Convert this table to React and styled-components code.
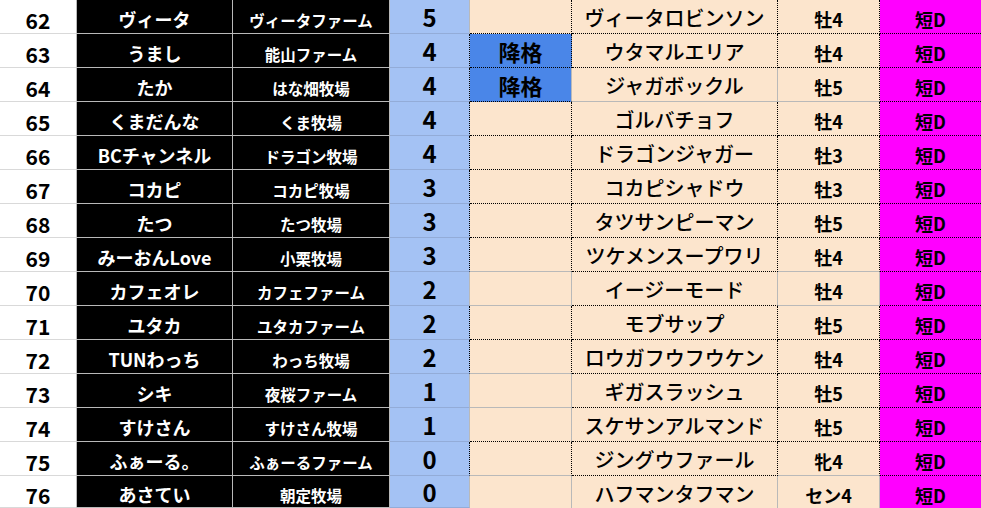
import React from "react";
import styled, { createGlobalStyle } from "styled-components";

const GlobalStyle = createGlobalStyle`
  html, body {
    margin: 0;
    padding: 0;
    background: #ffffff;
    overflow: hidden;
  }
  * {
    box-sizing: border-box;
  }
`;

const FONT = `"Noto Sans CJK JP", "Noto Sans", sans-serif`;

const LINE = {
  d: "1px dotted #000000",
  g: "1px solid #b9b9b9",
  l: "1px solid #d9d9d9",
  b: "1px solid #93acd8",
};

const Sheet = styled.div`
  display: grid;
  grid-template-columns: 77px 156px 157px 80px 102px 206px 102px 1fr;
  grid-template-rows: repeat(14, 34px) 32px;
  width: 981px;
  height: 508px;
  overflow: hidden;
  font-family: ${FONT};
`;

const Cell = styled.div`
  display: flex;
  align-items: center;
  justify-content: center;
  padding-top: ${(p) => p.$pt || 0}px;
  background: ${(p) => p.$bg || "#ffffff"};
  color: ${(p) => p.$color || "#000000"};
  font-size: ${(p) => p.$size}px;
  font-weight: ${(p) => p.$weight || 700};
  line-height: 1;
  white-space: nowrap;
  border-right: ${(p) => LINE[p.$right] || "none"};
  border-bottom: ${(p) => LINE[p.$bottom] || "none"};
`;

// v: right edges of col3..col6, h: bottoms of col4..col7
const rows = [
  ["62", "ヴィータ", "ヴィータファーム", "5", "", "ヴィータロビンソン", "牡4", "gddd", "dddd"],
  ["63", "うまし", "能山ファーム", "4", "降格", "ウタマルエリア", "牡4", "dddd", "dddd"],
  ["64", "たか", "はな畑牧場", "4", "降格", "ジャガボックル", "牡5", "dggd", "dggd"],
  ["65", "くまだんな", "くま牧場", "4", "", "ゴルバチョフ", "牡4", "dddd", "dddd"],
  ["66", "BCチャンネル", "ドラゴン牧場", "4", "", "ドラゴンジャガー", "牡3", "dddd", "dddd"],
  ["67", "コカピ", "コカピ牧場", "3", "", "コカピシャドウ", "牡3", "dddd", "dddd"],
  ["68", "たつ", "たつ牧場", "3", "", "タツサンピーマン", "牡5", "dddd", "dddd"],
  ["69", "みーおんLove", "小栗牧場", "3", "", "ツケメンスープワリ", "牡4", "dddd", "gdgd"],
  ["70", "カフェオレ", "カフェファーム", "2", "", "イージーモード", "牡4", "gggg", "gdgd"],
  ["71", "ユタカ", "ユタカファーム", "2", "", "モブサップ", "牡5", "dddd", "dddd"],
  ["72", "TUNわっち", "わっち牧場", "2", "", "ロウガフウフウケン", "牡4", "dddd", "gddd"],
  ["73", "シキ", "夜桜ファーム", "1", "", "ギガスラッシュ", "牡5", "ggdd", "gddd"],
  ["74", "すけさん", "すけさん牧場", "1", "", "スケサンアルマンド", "牡5", "ggdd", "dddd"],
  ["75", "ふぁーる。", "ふぁーるファーム", "0", "", "ジングウファール", "牝4", "dddd", "gdgd"],
  ["76", "あさてい", "朝定牧場", "0", "", "ハフマンタフマン", "セン4", "gggg", "...."],
];

const PEACH = "#fce5cd";

const Row = ({ data }) => {
  const [no, owner, farm, pts, mark, horse, sex, v, h] = data;
  return (
    <>
      <Cell $size={21} $pt={7} $right="g" $bottom="l">
        {no}
      </Cell>
      <Cell $bg="#000000" $color="#ffffff" $size={18} $pt={5} $right="g" $bottom="g">
        {owner}
      </Cell>
      <Cell $bg="#000000" $color="#ffffff" $size={15.5} $pt={9} $right="g" $bottom="g">
        {farm}
      </Cell>
      <Cell $bg="#a4c2f4" $size={24} $pt={0} $right={v[0]} $bottom="b">
        {pts}
      </Cell>
      <Cell $bg={mark ? "#4a86e8" : PEACH} $size={22} $pt={0} $right={v[1]} $bottom={h[0]}>
        {mark}
      </Cell>
      <Cell $bg={PEACH} $size={20} $weight={500} $pt={3} $right={v[2]} $bottom={h[1]}>
        {horse}
      </Cell>
      <Cell $bg={PEACH} $size={18} $pt={5} $right={v[3]} $bottom={h[2]}>
        {sex}
      </Cell>
      <Cell $bg="#ff00ff" $size={18} $pt={5} $bottom={h[3]}>
        短D
      </Cell>
    </>
  );
};

export default function App() {
  return (
    <>
      <GlobalStyle />
      <Sheet>
        {rows.map((r) => (
          <Row key={r[0]} data={r} />
        ))}
      </Sheet>
    </>
  );
}
